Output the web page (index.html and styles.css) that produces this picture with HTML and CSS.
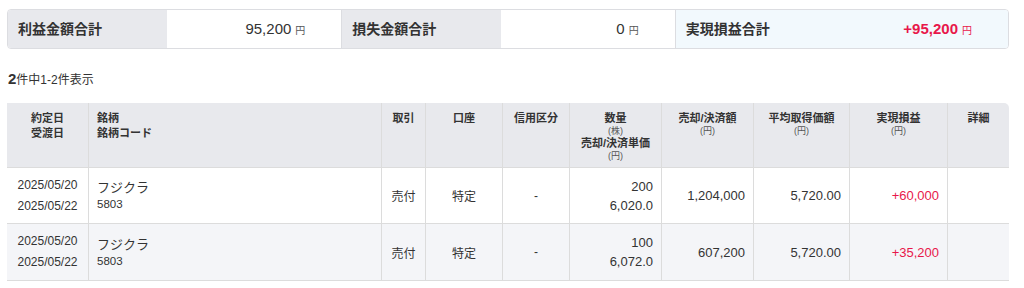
FILE: index.html
```html
<!DOCTYPE html>
<html lang="ja">
<head>
<meta charset="utf-8">
<title>実現損益</title>
<link rel="stylesheet" href="styles.css">
</head>
<body>
<div class="page">
  <div class="summary">
    <div class="grp">
      <div class="lbl">利益金額合計</div>
      <div class="val">95,200<span class="yen">円</span></div>
    </div>
    <div class="grp">
      <div class="lbl">損失金額合計</div>
      <div class="val">0<span class="yen">円</span></div>
    </div>
    <div class="grp total">
      <div class="lbl">実現損益合計</div>
      <div class="val plus">+95,200<span class="yen">円</span></div>
    </div>
  </div>

  <p class="count"><b>2</b>件中1-2件表示</p>

  <table class="trades">
    <colgroup>
      <col class="c-date"><col class="c-name"><col class="c-trade"><col class="c-acct"><col class="c-credit">
      <col class="c-qty"><col class="c-amt"><col class="c-avg"><col class="c-pl"><col class="c-detail">
    </colgroup>
    <thead>
      <tr>
        <th>約定日<br>受渡日</th>
        <th class="left">銘柄<br>銘柄コード</th>
        <th>取引</th>
        <th>口座</th>
        <th>信用区分</th>
        <th>数量<span class="sm">(株)</span>売却/決済単価<span class="sm">(円)</span></th>
        <th>売却/決済額<span class="sm">(円)</span></th>
        <th>平均取得価額<span class="sm">(円)</span></th>
        <th>実現損益<span class="sm">(円)</span></th>
        <th class="last">詳細</th>
      </tr>
    </thead>
    <tbody>
      <tr>
        <td class="date">2025/05/20<br>2025/05/22</td>
        <td class="name"><span class="nm">フジクラ</span><span class="code">5803</span></td>
        <td class="ctr">売付</td>
        <td class="ctr">特定</td>
        <td class="ctr">-</td>
        <td class="num qty">200<br>6,020.0</td>
        <td class="num">1,204,000</td>
        <td class="num">5,720.00</td>
        <td class="num plus">+60,000</td>
        <td></td>
      </tr>
      <tr class="alt">
        <td class="date">2025/05/20<br>2025/05/22</td>
        <td class="name"><span class="nm">フジクラ</span><span class="code">5803</span></td>
        <td class="ctr">売付</td>
        <td class="ctr">特定</td>
        <td class="ctr">-</td>
        <td class="num qty">100<br>6,072.0</td>
        <td class="num">607,200</td>
        <td class="num">5,720.00</td>
        <td class="num plus">+35,200</td>
        <td></td>
      </tr>
    </tbody>
  </table>
</div>
</body>
</html>
```

FILE: styles.css
```css
html, body {
  margin: 0;
  padding: 0;
  background: #ffffff;
}
body {
  font-family: "Liberation Sans", "Noto Sans CJK JP", sans-serif;
  color: #333333;
}
.page {
  padding: 9px 15px 0 7px;
}

/* summary bar */
.summary {
  display: grid;
  grid-template-columns: 1fr 1fr 1fr;
  width: 1000px;
  border: 1px solid #dcdde1;
  border-radius: 4px;
  overflow: hidden;
}
.grp {
  display: flex;
  height: 38px;
  line-height: 38px;
}
.grp + .grp {
  border-left: 1px solid #dcdde1;
}
.lbl {
  width: 149px;
  padding-left: 10px;
  background: #e8e9ed;
  font-size: 14px;
  font-weight: bold;
  color: #333333;
}
.val {
  flex: 1;
  text-align: right;
  padding-right: 36px;
  font-size: 15px;
  color: #333333;
}
.yen {
  font-size: 10px;
  margin-left: 4px;
  color: #555555;
}
.total {
  background: #f2f9fd;
}
.total .lbl {
  background: transparent;
}
.val.plus {
  color: #e8174a;
  font-weight: bold;
}
.val.plus .yen {
  color: #e8174a;
  font-weight: normal;
}

/* count */
.count {
  margin: 20px 0 13px 1px;
  line-height: 20px;
  font-size: 12px;
  color: #333333;
}
.count b {
  font-size: 15px;
}

/* table */
.trades {
  width: 1002px;
  table-layout: fixed;
  border-collapse: separate;
  border-spacing: 0;
}
.c-date { width: 81px; }
.c-name { width: 293px; }
.c-trade { width: 44px; }
.c-acct { width: 77px; }
.c-credit { width: 67px; }
.c-qty { width: 92px; }
.c-amt { width: 92px; }
.c-avg { width: 96px; }
.c-pl { width: 98px; }
.c-detail { width: 62px; }

.trades th,
.trades td {
  border-bottom: 1px solid #dcdcdc;
}
.trades th + th,
.trades td + td {
  border-left: 1px solid #dcdcdc;
}
.trades th {
  background: #e8e9ed;
  height: 56px;
  padding: 8px 4px 0;
  vertical-align: top;
  text-align: center;
  font-size: 11px;
  line-height: 15px;
  font-weight: bold;
  color: #333333;
}
.trades th.left {
  text-align: left;
  padding-left: 8px;
}
.trades th.last {
  border-top-right-radius: 5px;
}
.sm {
  display: block;
  font-size: 9px;
  line-height: 10px;
  font-weight: normal;
  color: #555555;
}

.trades td {
  height: 55px;
  padding: 0 8px;
  vertical-align: middle;
  font-size: 13px;
  color: #333333;
}
.trades tr.alt td {
  height: 56px;
  background: #f4f5f8;
}
.trades td.date {
  font-size: 12px;
  line-height: 21px;
  text-align: center;
  padding: 0;
}
.trades td.name {
  line-height: 16px;
}
.nm {
  display: block;
  font-size: 13px;
  line-height: 17px;
}
.code {
  display: block;
  font-size: 11.5px;
  line-height: 16px;
}
.trades td.ctr {
  text-align: center;
  font-size: 12px;
}
.trades td.num {
  text-align: right;
}
.trades td.qty {
  line-height: 19px;
}
.trades td.plus {
  color: #e8174a;
}
```
